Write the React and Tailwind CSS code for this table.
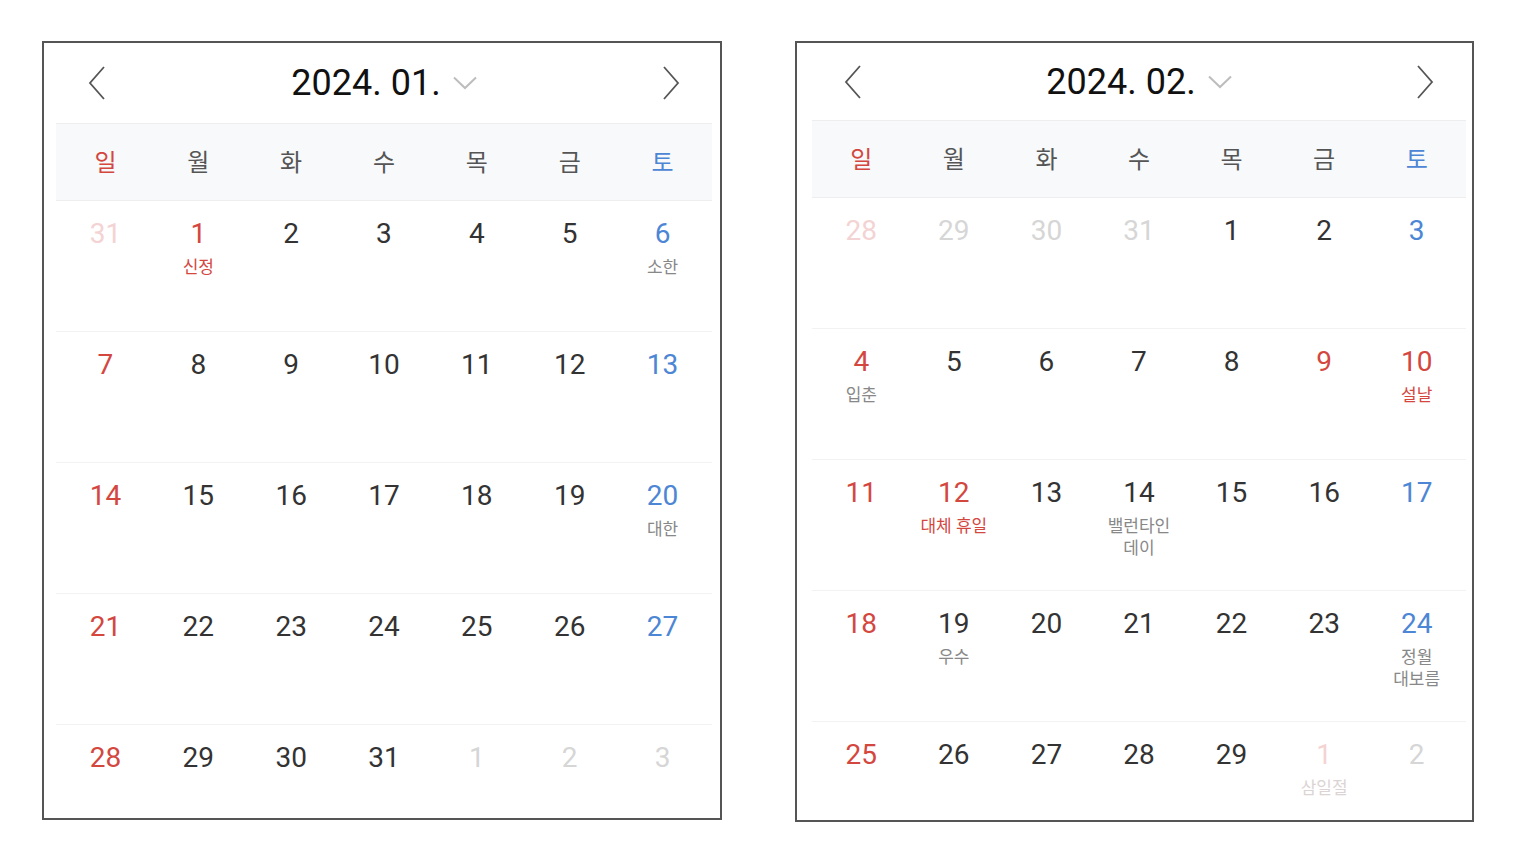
import React from 'react';

const RED = 'text-[#d4473f]';
const BLUE = 'text-[#4d86d4]';

const WEEKDAYS = ['일', '월', '화', '수', '목', '금', '토'];

// tone: r = red, b = blue, n = normal, fr = faded red, f = faded
const JAN = [
  [['31', 'fr'], ['1', 'r', '신정', 'r'], ['2'], ['3'], ['4'], ['5'], ['6', 'b', '소한']],
  [['7', 'r'], ['8'], ['9'], ['10'], ['11'], ['12'], ['13', 'b']],
  [['14', 'r'], ['15'], ['16'], ['17'], ['18'], ['19'], ['20', 'b', '대한']],
  [['21', 'r'], ['22'], ['23'], ['24'], ['25'], ['26'], ['27', 'b']],
  [['28', 'r'], ['29'], ['30'], ['31'], ['1', 'f'], ['2', 'f'], ['3', 'f']],
];

const FEB = [
  [['28', 'fr'], ['29', 'f'], ['30', 'f'], ['31', 'f'], ['1'], ['2'], ['3', 'b']],
  [['4', 'r', '입춘'], ['5'], ['6'], ['7'], ['8'], ['9', 'r'], ['10', 'r', '설날', 'r']],
  [['11', 'r'], ['12', 'r', '대체 휴일', 'r'], ['13'], ['14', 'n', '밸런타인\n데이'], ['15'], ['16'], ['17', 'b']],
  [['18', 'r'], ['19', 'n', '우수'], ['20'], ['21'], ['22'], ['23'], ['24', 'b', '정월\n대보름']],
  [['25', 'r'], ['26'], ['27'], ['28'], ['29'], ['1', 'fr', '삼일절', 'f'], ['2', 'f']],
];

const numTone = {
  r: RED,
  b: BLUE,
  n: 'text-[#333333]',
  fr: 'text-[#f3d3d3]',
  f: 'text-[#d6d6d6]',
};

const labelTone = {
  r: RED,
  g: 'text-[#888888]',
  f: 'text-[#dcd4d4]',
};

function Chevron({ dir }) {
  return (
    <svg width="18" height="34" viewBox="0 0 18 34" fill="none">
      <path
        d={dir === 'left' ? 'M16 1 L2 17 L16 33' : 'M2 1 L16 17 L2 33'}
        stroke="#555"
        strokeWidth="1.8"
        strokeLinejoin="miter"
      />
    </svg>
  );
}

function Cell({ day }) {
  const [n, tone = 'n', label, lt] = day;
  const labelCls = labelTone[lt || (tone === 'fr' || tone === 'f' ? 'f' : 'g')];
  return (
    <div className="flex flex-col items-center pt-[16px]">
      <span className={`text-[28px] leading-[34px] ${numTone[tone]}`}>{n}</span>
      {label && (
        <span className={`mt-[5px] text-[17px] leading-[22px] text-center whitespace-pre-line ${labelCls}`}>
          {label}
        </span>
      )}
    </div>
  );
}

function Calendar({ title, weeks, box, pad, headH }) {
  return (
    <div className={`flex flex-col overflow-hidden border-2 border-[#555] bg-white ${box} ${pad}`}>
      <div className={`flex items-center justify-between px-[32px] ${headH}`}>
        <Chevron dir="left" />
        <div className="flex items-center gap-[12px]">
          <span className="text-[36px] leading-none text-[#111]">{title}</span>
          <svg width="24" height="14" viewBox="0 0 24 14" fill="none">
            <path d="M1 1.5 L12 12 L23 1.5" stroke="#bdbdbd" strokeWidth="2" />
          </svg>
        </div>
        <Chevron dir="right" />
      </div>
      <div className="grid h-[78px] shrink-0 grid-cols-7 items-center border-y border-[#eeeeee] bg-[#f7f9fb] px-[3px] pt-[2px]">
        {WEEKDAYS.map((w, i) => (
          <span
            key={w}
            className={`text-center text-[24px] ${i === 0 ? RED : i === 6 ? BLUE : 'text-[#555]'}`}
          >
            {w}
          </span>
        ))}
      </div>
      {weeks.map((wk, i) => (
        <div key={i} className="grid h-[131px] shrink-0 grid-cols-7 border-b border-[#f2f2f2] px-[3px]">
          {wk.map((d, j) => (
            <Cell key={j} day={d} />
          ))}
        </div>
      ))}
    </div>
  );
}

export default function App() {
  return (
    <div
      className="flex min-h-[867px] w-[1529px] items-start gap-[73px] bg-white pl-[42px] pt-[41px]"
      style={{ fontFamily: "Roboto, 'Noto Sans CJK KR', sans-serif" }}
    >
      <Calendar
        title="2024. 01."
        weeks={JAN}
        box="w-[680px] h-[779px]"
        pad="pl-[12px] pr-[8px]"
        headH="h-[80px] shrink-0"
      />
      <Calendar
        title="2024. 02."
        weeks={FEB}
        box="w-[679px] h-[781px]"
        pad="pl-[15px] pr-[6px]"
        headH="h-[77px] shrink-0"
      />
    </div>
  );
}
